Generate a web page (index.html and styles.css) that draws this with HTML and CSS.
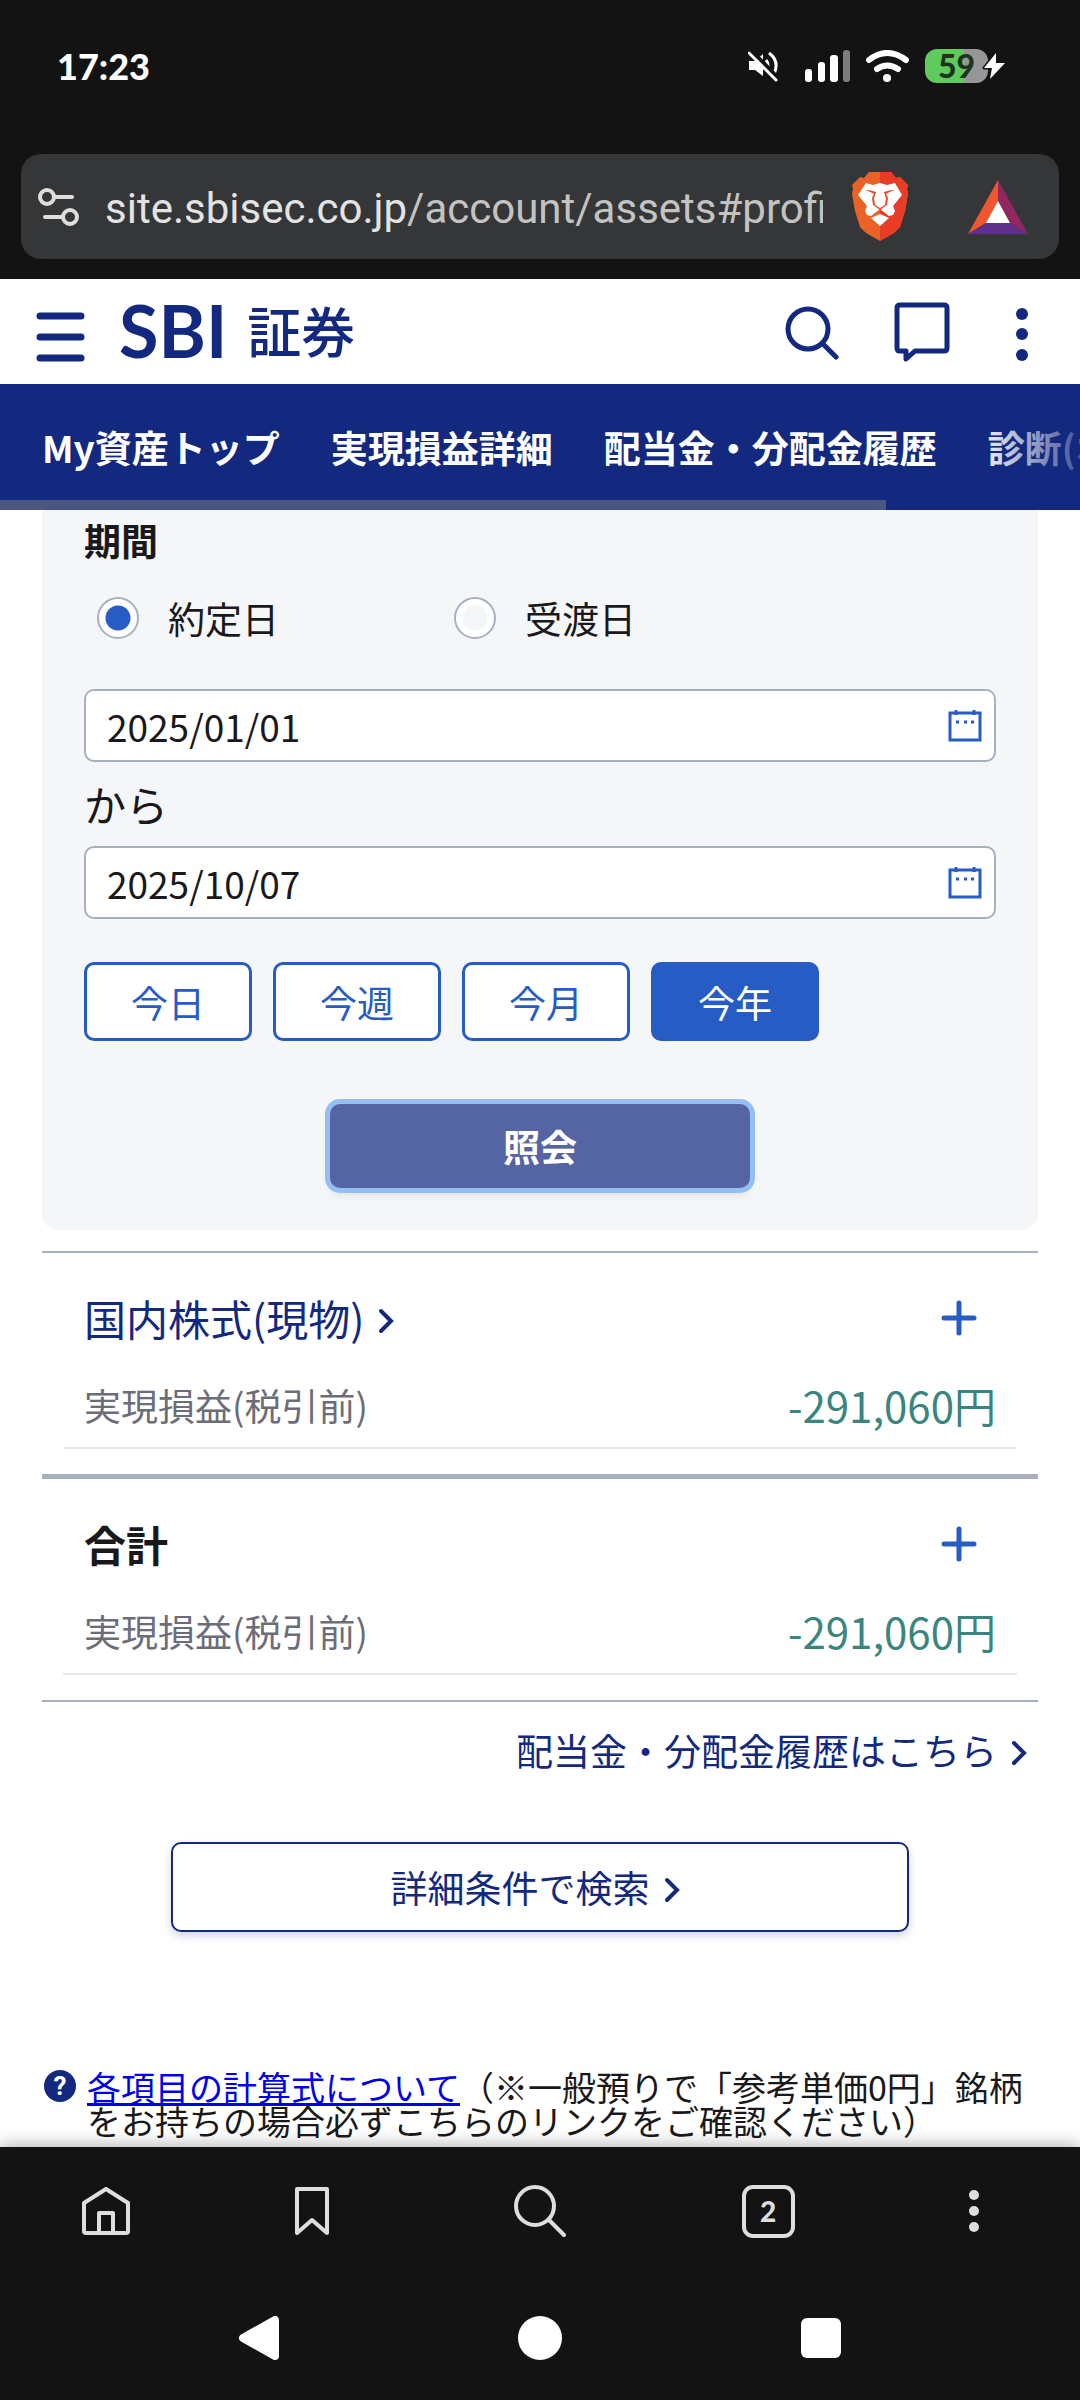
FILE: index.html
```html
<!DOCTYPE html>
<html lang="ja">
<head>
    <meta charset="UTF-8">
    <meta name="viewport" content="width=device-width, initial-scale=1.0">
    <title>実現損益 | SBI証券</title>
    <link rel="stylesheet" href="styles.css">
</head>
<body>
    <div class="browser-top">
        <div class="status-bar">
            <span class="clock">17:23</span>
            <div class="status-icons">
                <svg class="icon-mute" width="30" height="32" viewBox="0 0 30 32">
                    <path d="M1 11h6l8-7v22l-8-6H1z" fill="#fff"/>
                    <path d="M18 10q4 5 0 11M21 3q11 8 5 21" fill="none" stroke="#fff" stroke-width="3"/>
                    <path d="M3 0l27 28" stroke="#131313" stroke-width="4"/>
                    <path d="M1 3l27 27" stroke="#fff" stroke-width="3" stroke-linecap="round"/>
                </svg>
                <svg class="icon-signal" width="46" height="32" viewBox="0 0 46 32">
                    <rect x="0" y="19" width="7" height="13" rx="3" fill="#fff"/>
                    <rect x="13" y="12" width="7" height="20" rx="3" fill="#fff"/>
                    <rect x="25" y="5" width="8" height="27" rx="3" fill="#fff"/>
                    <rect x="38" y="0" width="7" height="32" rx="3" fill="#7d7d7d"/>
                </svg>
                <svg class="icon-wifi" width="43" height="32" viewBox="0 0 43 32">
                    <path d="M3 10q18-14 37 0M11 19q10-7 21 0" fill="none" stroke="#fff" stroke-width="6" stroke-linecap="round"/>
                    <circle cx="21" cy="28" r="4" fill="#fff"/>
                </svg>
                <span class="battery">59</span>
                <svg class="icon-bolt" width="26" height="30" viewBox="0 0 26 30">
                    <path d="M15 2L3 17h8L9 28 24 12h-9z" fill="#fff" stroke="#131313" stroke-width="3" paint-order="stroke" stroke-linejoin="round"/>
                </svg>
            </div>
        </div>
        <div class="address-bar">
            <svg width="41" height="40" viewBox="0 0 41 40" fill="none" stroke="#dedede" stroke-width="4" stroke-linecap="round">
                <circle cx="9" cy="10" r="7"/>
                <path d="M17 10h17M7 30h17"/>
                <circle cx="32" cy="30" r="7"/>
            </svg>
            <button class="address-url" type="button">site.sbisec.co.jp<span class="address-path">/account/assets#profi</span></button>
            <svg class="icon-brave" width="56" height="69" viewBox="0 0 56 69">
                <path d="M17 0h22l5 6 4-1 8 8-1 4 1 5-3 17-5 16-6 6-14 8-14-8-6-6-5-16L0 22l1-5-1-4 8-8 4 1z" fill="#eb6229"/>
                <path d="M28 0h11l5 6 4-1 8 8-1 4 1 5-3 17-5 16-6 6-14 8z" fill="#e93c26"/>
                <path d="M14 11l7 2 7-2 7 2 8-2 7 12-9 11 2 5-2 4-4 1-9-7-9 7-4-1-2-4 2-5L6 23z" fill="#fff"/>
                <path d="M13 18q6 0 11 2-1 4-2 6l1 7 5 3 5-3 1-7q-1-2-2-6 5-2 11-2-6 2-9 4l2 4-1 7-7 5-7-5-1-7 2-4q-3-2-9-4z" fill="#e94a26"/>
                <path d="M19 46l9-4 9 4-9 8z" fill="#fff"/>
            </svg>
            <svg class="icon-bat" width="60" height="54" viewBox="0 0 60 54">
                <path d="M30 0L0 54l18-11 12-22z" fill="#f0562f"/>
                <path d="M30 0l30 54-18-11-12-22z" fill="#92275f"/>
                <path d="M0 54h60L42 43H18z" fill="#5f2f8c"/>
                <path d="M30 21L18 43h24z" fill="#fff"/>
            </svg>
        </div>
    </div>

    <header class="site-header">
        <button class="icon-button" type="button" aria-label="メニュー">
            <svg width="49" height="60" viewBox="0 0 49 60" stroke="#13287f" stroke-width="7" stroke-linecap="round">
                <path d="M4 14h41M4 35h41M4 56h41"/>
            </svg>
        </button>
        <a class="logo" href="#"><span class="logo-latin">SBI</span><span class="logo-kanji">証券</span></a>
        <div class="header-tools">
            <button class="icon-button" type="button" aria-label="検索">
                <svg width="54" height="56" viewBox="0 0 54 56" fill="none" stroke="#13287f" stroke-width="5" stroke-linecap="round">
                    <circle cx="23" cy="25" r="20"/>
                    <path d="M38 40l13 13"/>
                </svg>
            </button>
            <button class="icon-button" type="button" aria-label="チャット">
                <svg width="56" height="60" viewBox="0 0 56 60" fill="none" stroke="#13287f" stroke-width="5" stroke-linejoin="round">
                    <path d="M6 3h44q3 0 3 3v40q0 3-3 3H21l-9 8v-8H6q-3 0-3-3V6q0-3 3-3z"/>
                </svg>
            </button>
            <button class="icon-button" type="button" aria-label="その他">
                <svg width="34" height="58" viewBox="0 0 34 58" fill="#13287f">
                    <circle cx="17" cy="11" r="6"/>
                    <circle cx="17" cy="31" r="6"/>
                    <circle cx="17" cy="52" r="6"/>
                </svg>
            </button>
        </div>
    </header>

    <nav class="tabs">
        <div class="tab-list">
            <a href="#">My資産トップ</a>
            <a href="#">実現損益詳細</a>
            <a href="#">配当金・分配金履歴</a>
            <a href="#">診断(ポートフォリオ)</a>
        </div>
        <div class="tab-scroll"></div>
    </nav>

    <main>
        <form class="filter">
            <h2>期間</h2>
            <div class="radios">
                <label><input type="radio" name="basis" checked>約定日</label>
                <label><input type="radio" name="basis">受渡日</label>
            </div>
            <div class="date-field">
                <input id="from" type="text" value="2025/01/01" aria-label="開始日">
                <button class="icon-button" type="button" aria-label="カレンダー">
                    <svg width="34" height="32" viewBox="0 0 34 32">
                        <path d="M2 3h30v27H2zM8 0v5M26 0v5" fill="none" stroke="#275cc4" stroke-width="3"/>
                        <path d="M8 12h3M16 12h3M23 12h3" stroke="#275cc4" stroke-width="3"/>
                    </svg>
                </button>
            </div>
            <label class="range-word" for="to">から</label>
            <div class="date-field">
                <input id="to" type="text" value="2025/10/07">
                <button class="icon-button" type="button" aria-label="カレンダー">
                    <svg width="34" height="32" viewBox="0 0 34 32">
                        <path d="M2 3h30v27H2zM8 0v5M26 0v5" fill="none" stroke="#275cc4" stroke-width="3"/>
                        <path d="M8 12h3M16 12h3M23 12h3" stroke="#275cc4" stroke-width="3"/>
                    </svg>
                </button>
            </div>
            <div class="presets">
                <button type="button">今日</button>
                <button type="button">今週</button>
                <button type="button">今月</button>
                <button type="button" class="active">今年</button>
            </div>
            <button class="submit" type="button">照会</button>
        </form>

        <section class="result">
            <div class="result-title">
                <a href="#">国内株式(現物)<svg class="chevron" width="16" height="34" viewBox="0 0 16 34"><path d="M3 10l10 10L3 30"/></svg></a>
                <button class="icon-button" type="button" aria-label="開く">
                    <svg width="36" height="36" viewBox="0 0 36 36" stroke="#275cc4" stroke-width="5" stroke-linecap="round"><path d="M18 3v30M3 18h30"/></svg>
                </button>
            </div>
            <dl>
                <dt>実現損益(税引前)</dt>
                <dd>-291,060円</dd>
            </dl>
        </section>
        <section class="result total">
            <div class="result-title">
                <h3>合計</h3>
                <button class="icon-button" type="button" aria-label="開く">
                    <svg width="36" height="36" viewBox="0 0 36 36" stroke="#275cc4" stroke-width="5" stroke-linecap="round"><path d="M18 3v30M3 18h30"/></svg>
                </button>
            </div>
            <dl>
                <dt>実現損益(税引前)</dt>
                <dd>-291,060円</dd>
            </dl>
        </section>

        <a class="history-link" href="#">配当金・分配金履歴はこちら<svg class="chevron" width="16" height="34" viewBox="0 0 16 34"><path d="M3 10l10 10L3 30"/></svg></a>

        <button class="detail-search" type="button">詳細条件で検索<svg class="chevron" width="16" height="34" viewBox="0 0 16 34"><path d="M3 10l10 10L3 30"/></svg></button>

        <div class="help">
            <span class="help-mark">?</span>
            <p><a href="#">各項目の計算式について</a>（※一般預りで「参考単価0円」銘柄をお持ちの場合必ずこちらのリンクをご確認ください）</p>
        </div>
    </main>

    <div class="browser-bottom">
        <div class="toolbar">
            <button class="icon-button" type="button" aria-label="ホーム">
                <svg width="48" height="48" viewBox="0 0 48 48" fill="none" stroke="#dedede" stroke-width="4" stroke-linejoin="round">
                    <path d="M2 16L24 2l22 14v28q0 2-2 2H4q-2 0-2-2zM17 46V26h14v20"/>
                </svg>
            </button>
            <button class="icon-button" type="button" aria-label="ブックマーク">
                <svg width="34" height="48" viewBox="0 0 34 48" fill="none" stroke="#dedede" stroke-width="4" stroke-linejoin="round">
                    <path d="M2 2h30v44L17 33 2 46z"/>
                </svg>
            </button>
            <button class="icon-button" type="button" aria-label="検索">
                <svg width="52" height="54" viewBox="0 0 52 54" fill="none" stroke="#dedede" stroke-width="4" stroke-linecap="round">
                    <circle cx="21" cy="22" r="19"/>
                    <path d="M35 36l15 15"/>
                </svg>
            </button>
            <button class="tab-count" type="button">2</button>
            <button class="icon-button" type="button" aria-label="メニュー">
                <svg width="12" height="44" viewBox="0 0 12 44" fill="#dedede">
                    <circle cx="6" cy="6" r="5"/>
                    <circle cx="6" cy="22" r="5"/>
                    <circle cx="6" cy="38" r="5"/>
                </svg>
            </button>
        </div>
        <div class="system-nav">
            <button class="icon-button" type="button" aria-label="戻る">
                <svg width="42" height="46" viewBox="0 0 42 46" fill="#fff" stroke="#fff" stroke-width="8" stroke-linejoin="round">
                    <path d="M37 5v36L5 23z"/>
                </svg>
            </button>
            <button class="icon-button" type="button" aria-label="ホーム画面">
                <svg width="46" height="46" viewBox="0 0 46 46" fill="#fff"><circle cx="23" cy="23" r="22"/></svg>
            </button>
            <button class="icon-button" type="button" aria-label="アプリ一覧">
                <svg width="42" height="42" viewBox="0 0 42 42" fill="#fff"><rect x="1" y="1" width="40" height="40" rx="6"/></svg>
            </button>
        </div>
    </div>
</body>
</html>
```
FILE: styles.css
```css
* {
    box-sizing: border-box;
}
body {
    margin: 0;
    min-height: 100vh;
    display: flex;
    flex-direction: column;
    background-color: #fff;
    color: #19191b;
    font-family: "Noto Sans CJK JP", sans-serif;
    font-size: 37px;
    line-height: 54px;
}
a {
    color: #13287f;
    text-decoration: none;
}
button {
    font: inherit;
    color: inherit;
    cursor: pointer;
}
svg {
    display: block;
    flex-shrink: 0;
}
h2, h3, p, dl, dt, dd {
    margin: 0;
}
.icon-button {
    display: flex;
    align-items: center;
    justify-content: center;
    padding: 0;
    border: none;
    background: none;
}

/* browser chrome, top */
.browser-top {
    background-color: #131313;
    padding: 0 21px 20px;
}
.status-bar {
    display: flex;
    align-items: center;
    justify-content: space-between;
    height: 132px;
    margin-bottom: 22px;
    padding: 0 52px 0 36px;
}
.clock {
    color: #fff;
    font-family: Lato, sans-serif;
    font-size: 36px;
    font-weight: 900;
    line-height: 50px;
}
.status-icons {
    display: flex;
    align-items: center;
}
.icon-mute {
    margin-right: 27px;
}
.icon-signal {
    margin-right: 15px;
}
.icon-wifi {
    margin-right: 16px;
}
.battery {
    width: 63px;
    height: 34px;
    border-radius: 12px;
    background: linear-gradient(to right, #5fcb5c 62%, #969696 62%);
    color: #1c351c;
    font-family: Lato, sans-serif;
    font-size: 32px;
    font-weight: 900;
    line-height: 34px;
    text-align: center;
}
.icon-bolt {
    margin-left: -7px;
}
.address-bar {
    display: flex;
    align-items: center;
    height: 105px;
    padding: 0 31px 0 17px;
    border-radius: 20px;
    background-color: #353638;
}
.address-url {
    flex: 1;
    min-width: 0;
    margin: 0 29px 0 26px;
    padding: 4px 0 0;
    border: none;
    background: none;
    color: #e3e3e3;
    font-family: Roboto, sans-serif;
    font-size: 42px;
    text-align: left;
    white-space: nowrap;
    overflow: hidden;
}
.address-path {
    color: #c3c4c1;
}
.icon-brave {
    margin-right: 60px;
}

/* site header */
.site-header {
    display: flex;
    align-items: center;
    height: 105px;
    padding: 0 41px 0 36px;
}
.logo {
    display: flex;
    align-items: center;
    gap: 20px;
    margin-left: 34px;
    padding-bottom: 4px;
    line-height: 72px;
}
.logo-latin {
    font-family: Lato, sans-serif;
    font-size: 72px;
    font-weight: 700;
}
.logo-kanji {
    font-size: 54px;
    font-weight: 500;
}
.header-tools {
    display: flex;
    align-items: center;
    gap: 55px;
    margin-left: auto;
}
.tabs {
    position: relative;
    background-color: #13287f;
    overflow: hidden;
}
.tabs::after {
    content: "";
    position: absolute;
    top: 0;
    right: 0;
    width: 105px;
    height: 100%;
    background: linear-gradient(to right, rgba(19, 40, 127, 0), rgba(19, 40, 127, 0.8));
}
.tab-list {
    display: flex;
    gap: 51px;
    padding: 36px 42px 26px;
}
.tab-list a {
    color: #fff;
    font-weight: 700;
    white-space: nowrap;
}
.tab-scroll {
    width: 82%;
    height: 10px;
    background-color: #4a567f;
}

/* filter panel */
main {
    flex: 1;
    padding: 0 42px 8px;
}
.filter {
    padding: 10px 42px 42px;
    border-radius: 0 0 16px 16px;
    background-color: #f4f6f8;
}
.filter h2 {
    font-size: 37px;
    line-height: 40px;
}
.radios {
    display: flex;
    margin: 37px 13px 50px;
}
.radios label {
    display: flex;
    align-items: center;
    gap: 29px;
    width: 357px;
    height: 42px;
}
.radios input {
    appearance: none;
    width: 42px;
    height: 42px;
    margin: 0;
    border: 2px solid #a8b0c0;
    border-radius: 50%;
    background: radial-gradient(circle, #f4f6f8 12px, #fff 13px);
}
.radios input:checked {
    background: radial-gradient(circle, #275cc4 12px, #fff 13px);
}
.date-field {
    display: flex;
    align-items: center;
    height: 73px;
    padding: 0 12px 0 21px;
    border: 2px solid #a8b0c0;
    border-radius: 10px;
    background-color: #fff;
}
.date-field input {
    flex: 1;
    min-width: 0;
    padding: 0;
    border: none;
    outline: none;
    background: none;
    color: inherit;
    font: inherit;
}
.range-word {
    display: block;
    font-size: 42px;
    line-height: 84px;
}
.presets {
    display: flex;
    gap: 21px;
    margin: 43px 0 63px;
}
.presets button {
    width: 168px;
    height: 79px;
    padding: 0;
    border: 3px solid #275cc4;
    border-radius: 10px;
    background-color: #fff;
    color: #275cc4;
}
.presets .active {
    background-color: #275cc4;
    color: #fff;
}
.submit {
    display: block;
    width: 420px;
    height: 84px;
    margin: 0 auto;
    padding: 0;
    border: none;
    border-radius: 10px;
    background-color: #5565a3;
    box-shadow: 0 0 0 5px #93bff2, 0 6px 10px rgba(0, 0, 0, 0.1);
    color: #fff;
    font-weight: 700;
}

/* results */
.result {
    padding: 34px 21px 25px;
}
.filter + .result {
    margin-top: 21px;
    border-top: 2px solid #a8b0c0;
}
.result.total {
    border-top: 5px solid #a8b0c0;
    border-bottom: 2px solid #a8b0c0;
}
.result-title {
    display: flex;
    align-items: center;
    justify-content: space-between;
    padding: 0 40px 0 21px;
    font-size: 42px;
    line-height: 62px;
}
.result-title a {
    display: flex;
    align-items: center;
    gap: 14px;
}
.result-title h3 {
    font-size: 42px;
}
.result dl {
    display: flex;
    justify-content: space-between;
    margin-top: 30px;
    padding: 0 21px 16px;
    border-bottom: 2px solid #e4e8ee;
    line-height: 52px;
}
.result dt {
    color: #6b6e78;
}
.result dd {
    color: #3a857f;
    font-size: 42px;
}
.chevron {
    fill: none;
    stroke: #13287f;
    stroke-width: 4px;
    stroke-linecap: round;
}
.history-link {
    display: flex;
    align-items: center;
    justify-content: flex-end;
    gap: 14px;
    margin-top: 21px;
    padding-right: 11px;
}
.detail-search {
    display: flex;
    align-items: center;
    justify-content: center;
    gap: 14px;
    width: 74%;
    height: 90px;
    margin: 65px auto 0;
    padding: 0 10px 0 0;
    border: 2px solid #13287f;
    border-radius: 10px;
    background-color: #fff;
    box-shadow: 0 4px 8px rgba(19, 40, 127, 0.2);
    color: #13287f;
}
.help {
    display: flex;
    gap: 11px;
    margin-top: 138px;
    padding-left: 2px;
    font-size: 34px;
    line-height: 34px;
}
.help-mark {
    flex-shrink: 0;
    width: 32px;
    height: 32px;
    border-radius: 50%;
    background-color: #13287f;
    color: #fff;
    font-family: Roboto, sans-serif;
    font-size: 26px;
    font-weight: 700;
    line-height: 32px;
    text-align: center;
}
.help a {
    color: #00e;
    text-decoration: underline;
    text-decoration-thickness: 3px;
}

/* browser chrome, bottom */
.browser-bottom {
    position: relative;
    background-color: #131313;
    box-shadow: 0 -2px 16px rgba(0, 0, 0, 0.3);
}
.toolbar {
    display: grid;
    grid-template-columns: 49fr 54fr 60fr 54fr 49fr;
    align-items: center;
    justify-items: center;
    height: 128px;
    padding: 0 8px;
}
.tab-count {
    width: 53px;
    height: 53px;
    padding: 0;
    border: 4px solid #dedede;
    border-radius: 11px;
    background: none;
    color: #dedede;
    font-family: Lato, sans-serif;
    font-size: 28px;
    font-weight: 900;
    line-height: 44px;
}
.system-nav {
    display: grid;
    grid-template-columns: repeat(3, 1fr);
    align-items: center;
    height: 125px;
    padding: 0 11%;
}
```
